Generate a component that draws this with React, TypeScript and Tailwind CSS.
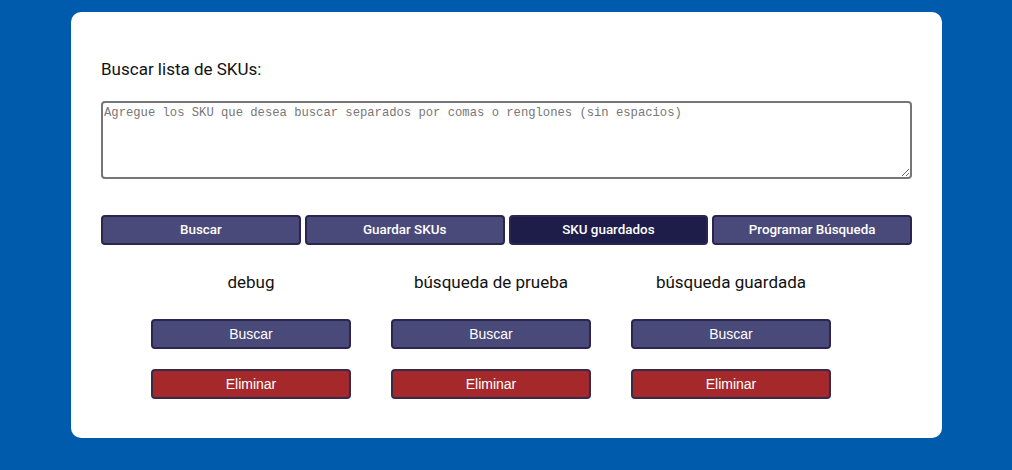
import React from 'react';

const topBtns = [
  { label: 'Buscar', dark: false },
  { label: 'Guardar SKUs', dark: false },
  { label: 'SKU guardados', dark: true },
  { label: 'Programar Búsqueda', dark: false },
];

const saved = ['debug', 'búsqueda de prueba', 'búsqueda guardada'];

export default function App() {
  return (
    <div className="min-h-[470px] w-full bg-[#005bac] pt-[12px] font-['Roboto',sans-serif]">
      <div className="ml-[71px] w-[871px] h-[426px] bg-white rounded-[10px] px-[30px] pt-[47px]">
        {/* Label + textarea */}
        <label className="block text-[17px] leading-[20px] text-[#111]">Buscar lista de SKUs:</label>
        <textarea
          className="mt-[22px] block w-[811px] h-[78px] border-2 border-[#767676] rounded-[4px] px-[1px] pt-[3px] font-['Liberation_Mono',monospace] text-[12.2px] leading-[15px] text-[#333] placeholder:text-[#777] outline-none"
          placeholder="Agregue los SKU que desea buscar separados por comas o renglones (sin espacios)"
        />

        {/* Main actions */}
        <div className="mt-[36px] flex gap-[4px]">
          {topBtns.map((b) => (
            <button
              key={b.label}
              className={
                'w-[200px] h-[30px] rounded-[4px] border-2 border-[#2b2650] text-white text-[13.4px] font-medium ' +
                (b.dark ? 'bg-[#1e1d4a]' : 'bg-[#4a4a7a]')
              }
            >
              {b.label}
            </button>
          ))}
        </div>

        {/* Saved searches */}
        <div className="mt-[25px] ml-[30px] flex">
          {saved.map((s) => (
            <div key={s} className="w-[240px] flex flex-col items-center">
              <div className="h-[24px] text-[17px] leading-[24px] text-[#111]">{s}</div>
              <button className="mt-[25px] w-[200px] h-[30px] rounded-[4px] border-2 border-[#2b2650] bg-[#4a4a7a] text-white text-[14px] font-['Liberation_Sans',sans-serif]">
                Buscar
              </button>
              <button className="mt-[20px] w-[200px] h-[30px] rounded-[4px] border-2 border-[#3a2a4a] bg-[#a5292a] text-white text-[14px] font-['Liberation_Sans',sans-serif]">
                Eliminar
              </button>
            </div>
          ))}
        </div>
      </div>
    </div>
  );
}
